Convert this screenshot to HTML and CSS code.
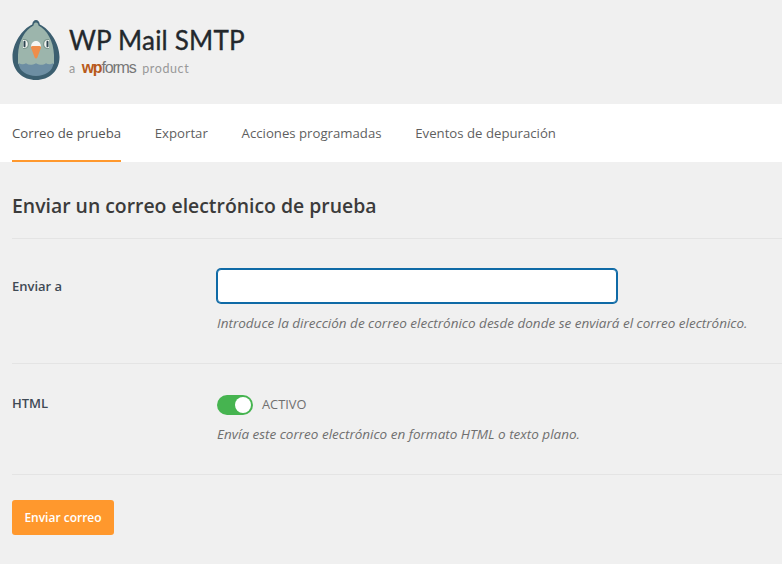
FILE: index.html
```html
<!DOCTYPE html>
<html lang="es">
<head>
<meta charset="utf-8">
<title>WP Mail SMTP</title>
<link rel="stylesheet" href="styles.css">
</head>
<body>
<header class="brand">
  <svg class="pigeon" width="48" height="62" viewBox="0 0 48 62" aria-hidden="true">
    <path d="M24 1c2 0 3.400 1.500 3.800 4.500C38 10 47.500 25 47.500 38 47.500 52 37 61 24 61S.5 52 .5 38C.5 25 10 10 20.200 5.500 20.600 2.500 22 1 24 1z" fill="#3c5f70"/>
    <path d="M24 3.500c1.400 0 2.200 1.200 2.500 3C35 11 41.500 22 42 36v9L24 50 6 45v-9C6.500 22 13 11 21.500 6.500 21.800 4.700 22.600 3.500 24 3.500z" fill="#9cb5ac"/>
    <path d="M6.500 44c3 1.500 5 1.700 7.500.3 3 2 6 2 10 0 4 2 7 2 10 0 2.500 1.400 4.500 1.200 7.500-.3C41 52 33 57 24 57S7 52 6.500 44z" fill="#6d8ea3"/>
    <path d="M11 20c3.500-.5 6 1.500 6 5s-2.500 5.500-6 5z" fill="#7c978f"/>
    <path d="M11 21c3-.5 4.800 1.200 4.800 4s-1.800 4.500-4.800 4z" fill="#f2f4f0"/>
    <rect x="11.500" y="21.800" width="2" height="6.500" rx="1" fill="#2e4652"/>
    <path d="M37 20c-3.500-.5-6 1.500-6 5s2.500 5.500 6 5z" fill="#7c978f"/>
    <path d="M37 21c-3-.5-4.800 1.200-4.800 4s1.800 4.500 4.800 4z" fill="#f2f4f0"/>
    <rect x="34.500" y="21.800" width="2" height="6.500" rx="1" fill="#2e4652"/>
    <path d="M19 28c0-3.500 2-6 5-6s5 2.500 5 6z" fill="#f4f5f2"/>
    <path d="M20.500 27h7c1 0 1.800.8 1.500 1.800L25.300 38.500c-.5 1.200-2.100 1.200-2.600 0L19 28.800c-.3-1 .5-1.800 1.500-1.800z" fill="#ee8d4a"/>
  </svg>
  <div class="brand-text">
    <div class="wordmark">WP Mail SMTP</div>
    <div class="tagline">a <span class="wpforms"><span class="wp">wp</span>forms</span> product</div>
  </div>
</header>
<nav class="tabs">
  <a class="tab active">Correo de prueba</a>
  <a class="tab">Exportar</a>
  <a class="tab">Acciones programadas</a>
  <a class="tab">Eventos de depuración</a>
</nav>
<main class="content">
  <h1 class="title">Enviar un correo electrónico de prueba</h1>
  <section class="row row-email">
    <label class="label" for="to">Enviar a</label>
    <div class="field">
      <input class="input" id="to" type="email">
      <p class="desc">Introduce la dirección de correo electrónico desde donde se enviará el correo electrónico.</p>
    </div>
  </section>
  <section class="row row-html">
    <div class="label">HTML</div>
    <div class="field">
      <div class="toggle-line">
        <span class="toggle"><span class="knob"></span></span>
        <span class="toggle-label">ACTIVO</span>
      </div>
      <p class="desc">Envía este correo electrónico en formato HTML o texto plano.</p>
    </div>
  </section>
  <button class="send" type="button">Enviar correo</button>
</main>
</body>
</html>
```
FILE: styles.css
```css
* { box-sizing: border-box; }
html, body { margin: 0; height: 100%; }
body {
  background: #f0f0f0;
  color: #444;
  font-family: "Open Sans", "Noto Sans", sans-serif;
  font-size: 13px;
  overflow: hidden;
}
.brand {
  height: 104px;
  padding: 19px 12px 0;
  display: flex;
  align-items: flex-start;
  gap: 9px;
}
.pigeon { display: block; flex: none; }
.brand-text { padding-top: 4px; }
.wordmark {
  font-family: "Lato", sans-serif;
  font-size: 26px;
  line-height: 34px;
  font-weight: 400;
  color: #23282c;
  letter-spacing: .2px;
  -webkit-text-stroke: .35px #23282c;
}
.tagline {
  font-family: "Lato", sans-serif;
  font-size: 12.500px;
  line-height: 20px;
  margin-top: 1px;
  color: #999;
  letter-spacing: .6px;
}
.wpforms {
  font-family: "Liberation Sans", sans-serif;
  font-size: 16px;
  font-weight: 400;
  color: #777;
  letter-spacing: -1.200px;
  margin: 0 3px 0 2px;
}
.wp { color: #b85a1b; font-weight: 700; }
.tabs {
  height: 58px;
  background: #fff;
  padding: 0 12px;
  display: flex;
  gap: 33.750px;
}
.tab {
  color: #5f5f5f;
  font-size: 13.200px;
  line-height: 58px;
  height: 58px;
}
.tab.active {
  color: #555;
  border-bottom: 2px solid #ff982d;
}
.content { padding: 0 0 0 12px; }
.title {
  margin: 0;
  height: 77px;
  padding-top: 30px;
  font-size: 19.400px;
  line-height: 28px;
  font-weight: 600;
  color: #3b3b3b;
  border-bottom: 1px solid #e4e4e4;
}
.row {
  display: grid;
  grid-template-columns: 205px 1fr;
  border-bottom: 1px solid #e4e4e4;
}
.row-email { height: 125px; padding-top: 30px; }
.row-html { height: 111px; padding-top: 30px; }
.label {
  font-weight: 600;
  color: #3f4a55;
  line-height: 34px;
}
.row-html .label { line-height: 18px; }
.input {
  display: block;
  width: 400px;
  height: 34px;
  border: 1px solid #0f6aa6;
  box-shadow: 0 0 0 1px #0f6aa6;
  border-radius: 4px;
  background: #fff;
  outline: none;
}
.desc {
  margin: 10px 0 0;
  font-size: 13.500px;
  line-height: 20px;
  font-style: italic;
  color: #6f6f6f;
}
.toggle-line {
  display: flex;
  align-items: center;
  gap: 9px;
  height: 20px;
}
.toggle {
  width: 36px;
  height: 20px;
  border-radius: 10px;
  background: #46b450;
  display: flex;
  justify-content: flex-end;
  padding: 2px;
  margin-top: 2px;
}
.knob {
  width: 16px;
  height: 16px;
  border-radius: 50%;
  background: #fff;
}
.toggle-label { font-size: 12.800px; color: #6f6f6f; }
.send {
  display: block;
  margin-top: 25px;
  width: 102px;
  height: 35px;
  border: 0;
  border-radius: 3px;
  background: #ff982d;
  color: #fff;
  font-family: inherit;
  font-size: 12px;
  font-weight: 600;
  padding: 0;
}
```
